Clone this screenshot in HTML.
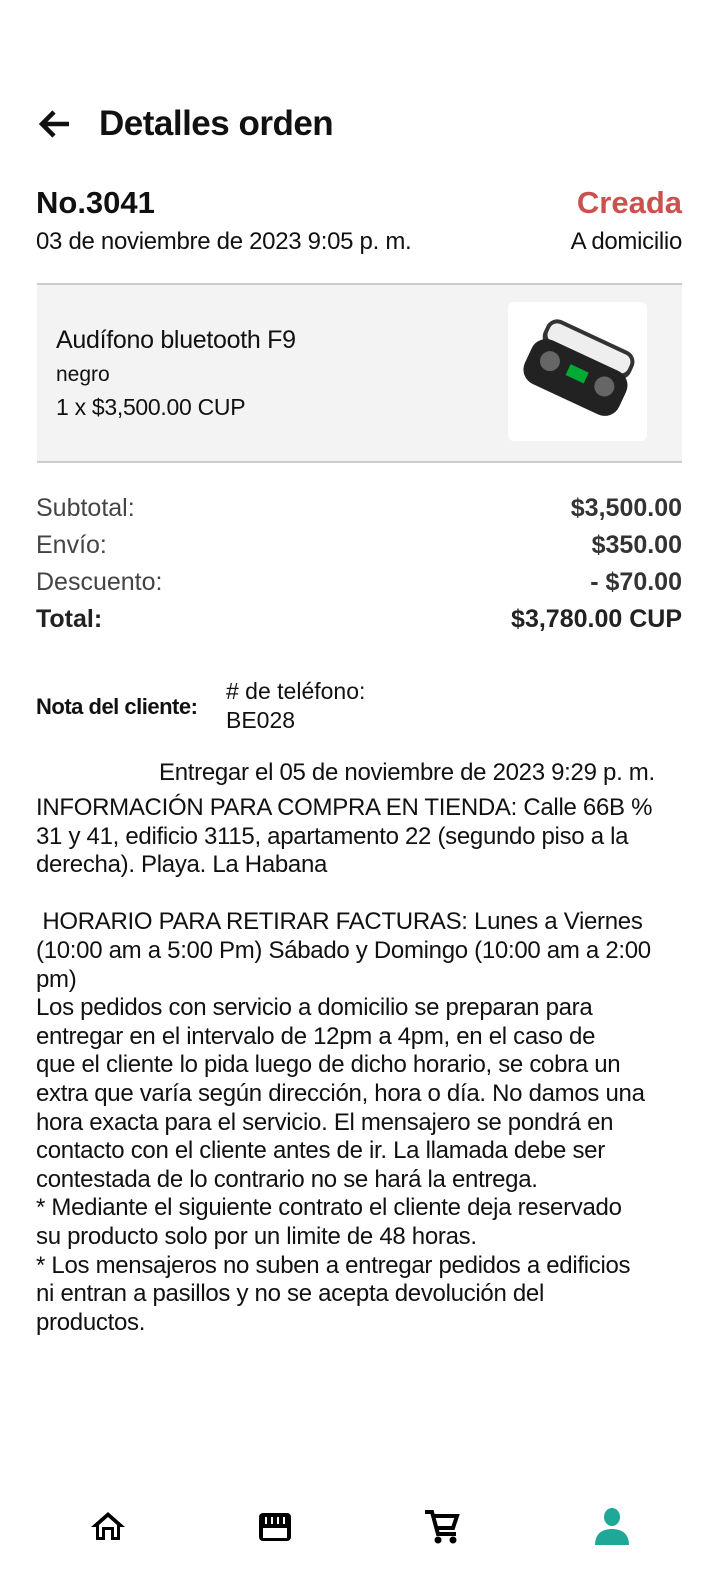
<!DOCTYPE html>
<html><head><meta charset="utf-8"><style>
body{margin:0;width:719px;height:1573px;background:#fff;font-family:"Liberation Sans",sans-serif;color:#111;position:relative;overflow:hidden}
.a{position:absolute;white-space:nowrap}
.b{font-weight:bold}
.r{right:37px;text-align:right}
.t{font-size:24px;line-height:28.6px;letter-spacing:-0.3px}
</style></head><body>
<svg class="a" style="left:37px;top:108px" width="34" height="32" viewBox="0 0 34 32"><path d="M32 16H6M17 4L5 16l12 12" stroke="#111" stroke-width="4.5" fill="none"/></svg>
<div class="a b" style="left:99px;top:104px;font-size:35px;letter-spacing:-0.5px">Detalles orden</div>
<div class="a b" style="left:36px;top:185px;font-size:31px">No.3041</div>
<div class="a b r" style="top:185px;font-size:31px;color:#c9524f">Creada</div>
<div class="a" style="left:36px;top:228px;font-size:24px;letter-spacing:-0.3px">03 de noviembre de 2023 9:05 p. m.</div>
<div class="a r" style="top:228px;font-size:24px;letter-spacing:-0.3px">A domicilio</div>
<div class="a" style="left:37px;top:283px;width:645px;height:176px;background:#f3f3f3;border-top:2px solid #ccc;border-bottom:2px solid #ccc"></div>
<div class="a" style="left:508px;top:302px;width:139px;height:139px;background:#fff;border-radius:6px">
<svg width="139" height="139" viewBox="0 0 139 139"><g transform="rotate(25 70 70)"><rect x="22" y="30" width="96" height="30" rx="12" fill="#333"/><rect x="26" y="34" width="88" height="20" rx="8" fill="#eee"/><rect x="18" y="52" width="104" height="48" rx="16" fill="#222"/><circle cx="40" cy="72" r="10" fill="#666"/><circle cx="100" cy="72" r="10" fill="#666"/><rect x="60" y="66" width="20" height="12" fill="#0a3"/></g></svg></div>
<div class="a" style="left:56px;top:326px;font-size:25px;letter-spacing:-0.3px">Audífono bluetooth F9</div>
<div class="a" style="left:56px;top:363px;font-size:21px">negro</div>
<div class="a" style="left:56px;top:394px;font-size:23px;letter-spacing:-0.3px">1 x $3,500.00 CUP</div>
<div class="a" style="left:36px;top:494px;font-size:25px;color:#444">Subtotal:</div>
<div class="a b r" style="top:494px;font-size:25px;color:#333">$3,500.00</div>
<div class="a" style="left:36px;top:531px;font-size:25px;color:#444">Envío:</div>
<div class="a b r" style="top:531px;font-size:25px;color:#333">$350.00</div>
<div class="a" style="left:36px;top:568px;font-size:25px;color:#444">Descuento:</div>
<div class="a b r" style="top:568px;font-size:25px;color:#333">- $70.00</div>
<div class="a b" style="left:36px;top:605px;font-size:25px;color:#222">Total:</div>
<div class="a b r" style="top:605px;font-size:25px;color:#222">$3,780.00 CUP</div>
<div class="a b" style="left:36px;top:694px;font-size:22px;letter-spacing:-0.5px">Nota del cliente:</div>
<div class="a" style="left:226px;top:678px;font-size:23px">#  de teléfono:</div>
<div class="a" style="left:226px;top:707px;font-size:23px">BE028</div>
<div class="a t" style="left:159px;top:759px">Entregar el 05 de noviembre de 2023 9:29 p. m.</div>
<div class="a t" style="left:36px;top:794px">INFORMACIÓN PARA COMPRA EN TIENDA: Calle 66B %<br>31 y 41, edificio 3115, apartamento 22 (segundo piso a la<br>derecha). Playa. La Habana<br><br>&nbsp;HORARIO PARA RETIRAR FACTURAS: Lunes a Viernes<br>(10:00 am a 5:00 Pm) Sábado y Domingo (10:00 am a 2:00<br>pm)<br>Los pedidos con servicio a domicilio se preparan para<br>entregar en el intervalo de 12pm a 4pm, en el caso de<br>que el cliente lo pida luego de dicho horario, se cobra un<br>extra que varía según dirección, hora o día. No damos una<br>hora exacta para el servicio. El mensajero se pondrá en<br>contacto con el cliente antes de ir. La llamada debe ser<br>contestada de lo contrario no se hará la entrega.<br>* Mediante el siguiente contrato el cliente deja reservado<br>su producto solo por un limite de 48 horas.<br>* Los mensajeros no suben a entregar pedidos a edificios<br>ni entran a pasillos y no se acepta devolución del<br>productos.</div>
<svg class="a" style="left:89px;top:1510px" width="38" height="32" viewBox="0 0 38 32"><path d="M19 2L2 17h5v13h9V20h6v10h9V17h5z" fill="#000"/><path d="M19 7L10 15v12h3V17h12v10h3V15z" fill="#fff"/></svg>
<svg class="a" style="left:256px;top:1510px" width="38" height="34" viewBox="0 0 38 34"><rect x="3" y="3" width="32" height="28" rx="4" fill="#000"/><rect x="7" y="18" width="24" height="10" fill="#fff"/><path d="M10 7v7M16 7v7M22 7v7M28 7v7" stroke="#fff" stroke-width="2"/></svg>
<svg class="a" style="left:423px;top:1509px" width="38" height="36" viewBox="0 0 38 36"><path d="M2 3h7l6 22h18M9 7h25l-4 12H13" stroke="#000" stroke-width="4" fill="none"/><circle cx="15" cy="31" r="3.5"/><circle cx="30" cy="31" r="3.5"/></svg>
<svg class="a" style="left:592px;top:1508px" width="40" height="38" viewBox="0 0 40 38"><ellipse cx="20" cy="9" rx="8" ry="9" fill="#1fa797"/><path d="M3 37c0-12 8-16 17-16s17 4 17 16z" fill="#1fa797"/></svg>
</body></html>
